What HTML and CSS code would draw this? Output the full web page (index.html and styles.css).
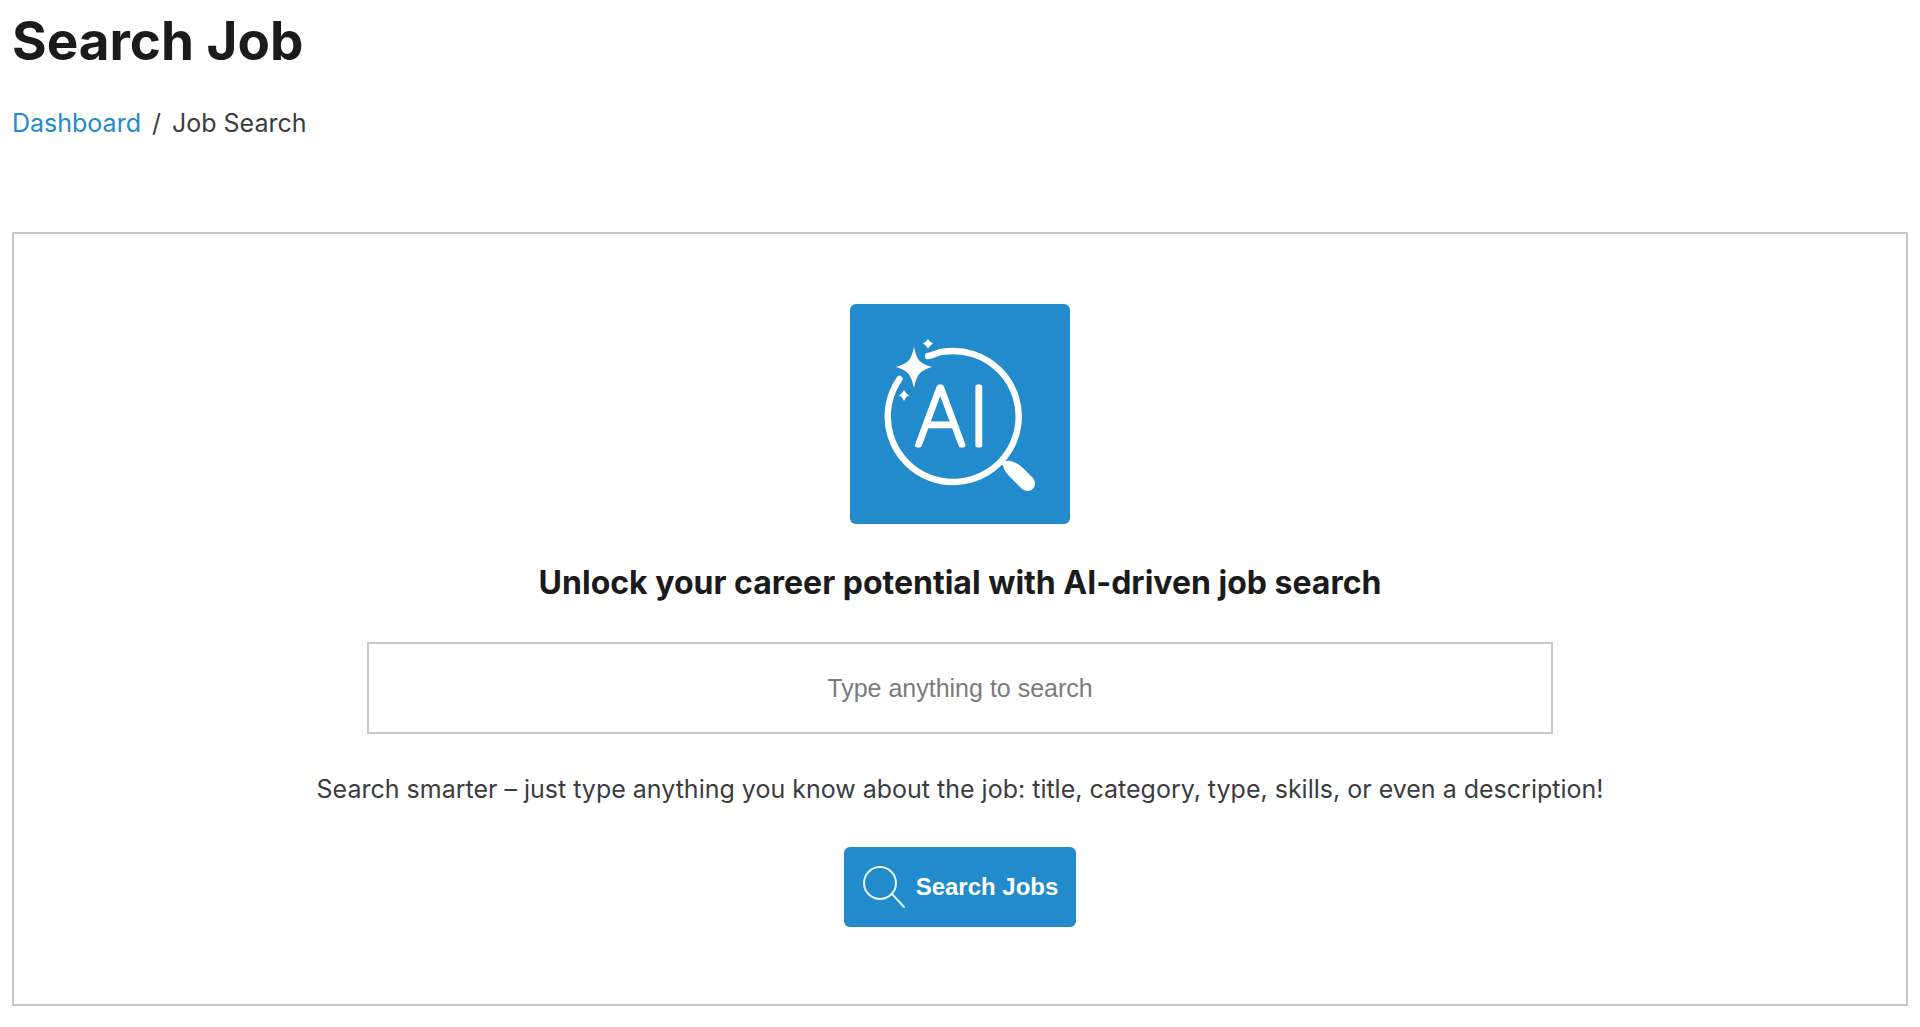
FILE: index.html
```html
<!DOCTYPE html>
<html lang="en">
<head>
  <meta charset="utf-8">
  <meta name="viewport" content="width=device-width, initial-scale=1">
  <title>Search Job</title>
  <link rel="stylesheet" href="styles.css">
</head>
<body>
  <header class="page-header">
    <h1 class="page-title">Search Job</h1>
    <nav aria-label="Breadcrumb">
      <ol class="breadcrumb">
        <li><a class="breadcrumb-link" href="#">Dashboard</a></li>
        <li class="breadcrumb-current" aria-current="page">Job Search</li>
      </ol>
    </nav>
  </header>

  <main>
    <form class="search-card" role="search">
      <svg class="ai-logo" viewBox="0 0 220 220" role="img" aria-label="AI search">
        <g fill="none" stroke="#fff" stroke-width="6.4" stroke-linecap="round">
          <path d="M78 52 C84 51 88 47.500 95 47.500 A65.500 65.500 0 1 1 49.500 75"/>
          <path stroke-width="5" stroke-linecap="butt" d="M151 156 L157 162"/>
        </g>
        <path fill="#fff" d="M153 162 C153 159 156 156 160 157 C166 158 171 162 174 165 L182 173 C188 179 184 187 178 187 C175 187 173 186 171 184 L160 173 C157 170 154 166 153 162Z"/>
        <path fill="#fff" d="M64 43 C67 56 69 59 82 63 C69 67 67 71 64 84 C61 71 59 67 46 63 C59 59 61 56 64 43Z"/>
        <path fill="#fff" d="M78 35 L80 37.500 L83 39.500 L80 42 L78 44.500 L76 42 L73 39.500 L76 37.500Z"/>
        <path fill="#fff" d="M54 86 L56 89 L59 91.500 L56 93.500 L54 97 L52 93.500 L49 91.500 L52 89Z"/>
        <text class="ai-logo-text" y="141"><tspan x="65">A</tspan><tspan x="119">I</tspan></text>
      </svg>
      <h2 class="search-heading"><label for="job-query">Unlock your career potential with AI-driven job search</label></h2>
      <input class="search-input" id="job-query" type="text" placeholder="Type anything to search">
      <p class="search-hint">Search smarter – just type anything you know about the job: title, category, type, skills, or even a description!</p>
      <button class="search-button" type="submit">
        <svg class="search-icon" viewBox="0 0 44 44" aria-hidden="true">
          <circle cx="18" cy="18" r="16"/>
          <path d="M30 29 L42 42"/>
        </svg>
        Search Jobs
      </button>
    </form>
  </main>
</body>
</html>
```

FILE: styles.css
```css
* {
  box-sizing: border-box;
}

body {
  margin: 0;
  padding: 11px 12px 20px;
  background: #fff;
  color: #3c3c40;
  font: 25px/32px Inter, "Liberation Sans", sans-serif;
}

.page-title {
  margin: 0;
  color: #1b1b1d;
  font-size: 53px;
  font-weight: 700;
  line-height: 60px;
}

.breadcrumb {
  display: flex;
  margin: 36px 0 93px;
  padding: 0;
  list-style: none;
}

.breadcrumb-link {
  color: #218bcb;
  text-decoration: none;
}

.breadcrumb-current::before {
  content: "/";
  margin: 0 11px;
}

.search-card {
  display: flex;
  flex-direction: column;
  align-items: center;
  padding: 70px 0 77px;
  border: 2px solid #c8c8c8;
  text-align: center;
}

.ai-logo {
  width: 220px;
  height: 220px;
  border-radius: 6px;
  background: #218bcb;
}

.ai-logo-text {
  fill: #fff;
  stroke: #fff;
  stroke-width: 5px;
  stroke-linejoin: round;
  font-size: 79px;
  font-weight: 100;
}

.search-heading {
  margin: 39px 0;
  color: #1b1b1d;
  font-size: 32px;
  font-weight: 700;
  line-height: 40px;
}

.search-input {
  width: 100%;
  max-width: 1186px;
  height: 92px;
  padding: 0 24px;
  border: 2px solid #c8c8c8;
  background: #fff;
  color: #3c3c40;
  font: 25px "Liberation Sans", Arial, sans-serif;
  text-align: center;
}

.search-input::placeholder {
  color: #7c7c7c;
  opacity: 1;
}

.search-hint {
  margin: 39px 0 42px;
}

.search-button {
  display: flex;
  align-items: center;
  gap: 10px;
  height: 80px;
  padding: 0 18px;
  border: 0;
  border-radius: 6px;
  background: #218bcb;
  color: #fff;
  font: bold 24px "Liberation Sans", Arial, sans-serif;
  cursor: pointer;
}

.search-icon {
  width: 44px;
  height: 44px;
  fill: none;
  stroke: #e4f6ff;
  stroke-width: 2px;
  stroke-linecap: round;
}
```
